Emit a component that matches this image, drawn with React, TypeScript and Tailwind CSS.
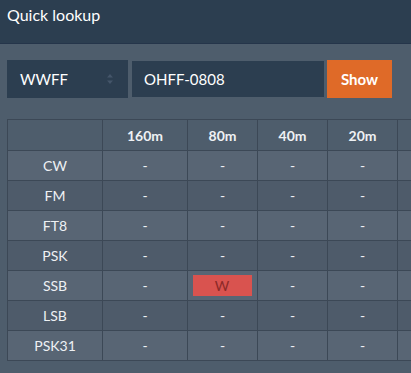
import React from 'react'

const BANDS = ['160m', '80m', '40m', '20m']
const MODES = ['CW', 'FM', 'FT8', 'PSK', 'SSB', 'LSB', 'PSK31']

// only the SSB / 80m slot is worked in this lookup
const WORKED: Record<string, string> = { 'SSB-80m': 'W' }

function bandWidth(i: number) {
  return i === 0 ? 'w-[85px]' : 'w-[70px]'
}

function SelectArrows() {
  return (
    <svg width="8" height="12" viewBox="0 0 8 12" className="text-[#45566a]">
      <path d="M4 1 L7 4.5 H1 Z" fill="currentColor" />
      <path d="M4 11 L7 7.5 H1 Z" fill="currentColor" />
    </svg>
  )
}

export default function App() {
  return (
    <div className="w-[411px] h-[373px] overflow-hidden bg-[#4e5d6c] font-['Lato','Open_Sans',sans-serif] text-[#eef1f4]">
      {/* title bar */}
      <div className="h-[44px] bg-[#2c3e50] border-b border-[#25354a] px-[7px] pt-[5px]">
        <h1 className="text-[16px] leading-[20px] text-white">Quick lookup</h1>
      </div>

      {/* lookup form */}
      <div className="flex items-center pl-[7px] mt-[16px]">
        <div className="w-[121px] h-[38px] bg-[#2c3e50] flex items-center justify-between pl-[13px] pr-[14px]">
          <span className="text-[15px] text-white">WWFF</span>
          <SelectArrows />
        </div>
        <div className="ml-[4px] w-[192px] h-[36px] bg-[#2c3e50] flex items-center pl-[12px]">
          <span className="text-[15px] text-white">OHFF-0808</span>
        </div>
        <button className="ml-[3px] w-[65px] h-[38px] bg-[#df6a28] text-white text-[15px] font-bold">
          Show
        </button>
      </div>

      {/* band / mode table, the next band column runs off the right edge */}
      <div className="mt-[21px] ml-[7px] w-max border-b border-[#3c4856] text-[14px]">
        <div className="flex h-[31px] border-t border-[#3c4856]">
          <div className="w-[95px] border-l border-[#3c4856]" />
          {BANDS.map((b, i) => (
            <div
              key={b}
              className={`${bandWidth(i)} border-l border-[#3c4856] flex items-center justify-center font-bold`}
            >
              {b}
            </div>
          ))}
          <div className="w-[70px] border-l border-[#3c4856]" />
        </div>
        {MODES.map((m, r) => (
          <div
            key={m}
            className={`flex h-[30px] border-t border-[#3c4856] ${r % 2 === 0 ? 'bg-[#586574]' : 'bg-[#4e5b6a]'}`}
          >
            <div className="w-[95px] border-l border-[#3c4856] flex items-center justify-center">{m}</div>
            {BANDS.map((b, i) => {
              const mark = WORKED[`${m}-${b}`]
              return (
                <div
                  key={b}
                  className={`${bandWidth(i)} border-l border-[#3c4856] flex items-center justify-center`}
                >
                  {mark ? (
                    <span className="w-[59px] h-[21px] ml-[-1px] bg-[#d9534f] text-[#8c2a28] flex items-center justify-center">
                      {mark}
                    </span>
                  ) : (
                    '-'
                  )}
                </div>
              )
            })}
            <div className="w-[70px] border-l border-[#3c4856]" />
          </div>
        ))}
      </div>
    </div>
  )
}
